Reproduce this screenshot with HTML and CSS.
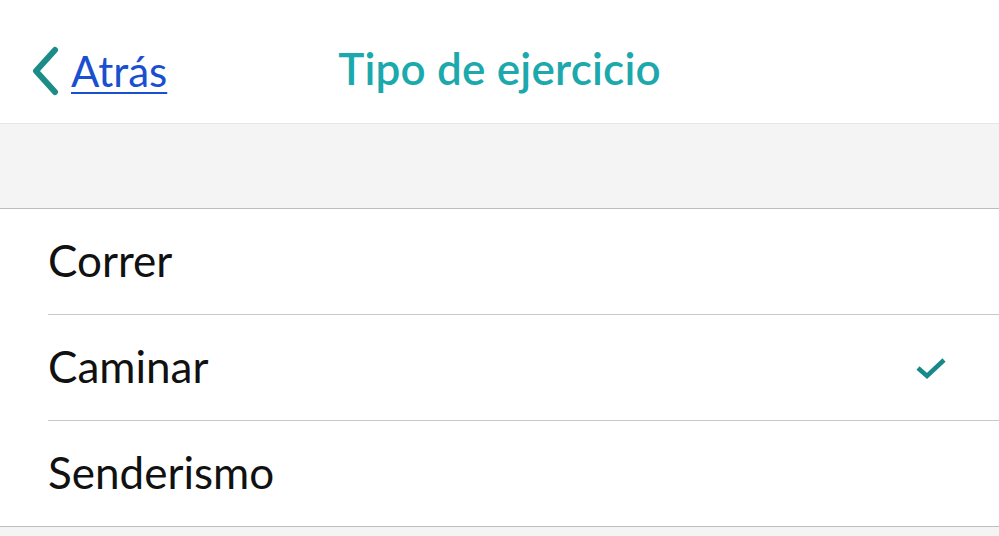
FILE: index.html
```html
<!DOCTYPE html>
<html lang="es">
<head>
    <meta charset="UTF-8">
    <title>Tipo de ejercicio</title>
    <link rel="stylesheet" href="styles.css">
</head>
<body>
    <!-- Top bar -->
    <div class="navbar">
        <a class="back" href="#">
            <svg class="chevron" width="30" height="50" viewBox="0 0 30 50"><path d="M25 4 L6 25 L25 46" fill="none" stroke="#1b8c87" stroke-width="6" stroke-linecap="round" stroke-linejoin="round"/></svg>
            <span class="back-text">Atrás</span>
        </a>
        <h1 class="title">Tipo de ejercicio</h1>
    </div>

    <div class="band"></div>

    <!-- Exercise list -->
    <ul class="list">
        <li class="row"><span>Correr</span></li>
        <li class="row"><span>Caminar</span>
            <svg class="check" width="32" height="24" viewBox="0 0 32 24"><path d="M3 12 L12 20 L29 4" fill="none" stroke="#17898a" stroke-width="4.5"/></svg>
        </li>
        <li class="row"><span>Senderismo</span></li>
    </ul>

    <div class="footer"></div>
</body>
</html>
```

FILE: styles.css
```css
body { margin: 0; font-family: Lato, "Open Sans", sans-serif; background: #fff; height: 536px; overflow: hidden; }

.navbar { height: 111px; padding-top: 12px; border-bottom: 1px solid #e6e6e6; display: flex; align-items: center; justify-content: center; position: relative; }
.back { position: absolute; left: 30px; top: 46px; display: flex; align-items: center; gap: 11px; text-decoration: none; }
.back-text { color: #1a4fcf; font-size: 42px; text-decoration: underline; text-decoration-thickness: 2px; text-underline-offset: 5px; }
.title { margin: 0; color: #1ca9ad; font-size: 44px; font-weight: 600; letter-spacing: 0.2px; }

.band { height: 84px; background: #f4f4f4; border-bottom: 1px solid #bdbdbd; }

.list { list-style: none; margin: 0; padding: 0 0 0 48px; }
.row { height: 105px; display: flex; align-items: center; justify-content: space-between; padding-right: 52px; border-bottom: 1px solid #c8c8c8; font-size: 44px; color: #111; }
.row span { margin-top: -4px; }
.row:last-child { border-bottom: none; }

.footer { border-top: 1px solid #bdbdbd; background: #f4f4f4; height: 20px; }
```
